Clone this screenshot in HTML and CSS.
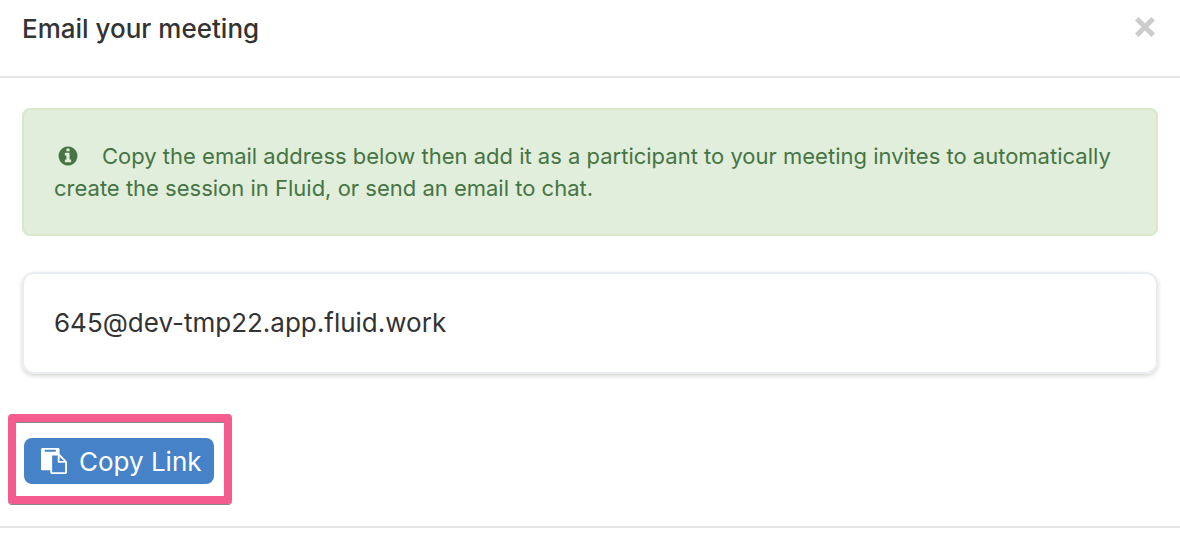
FILE: index.html
```html
<!DOCTYPE html>
<html lang="en">
  <head>
    <meta charset="utf-8">
    <title>Email your meeting</title>
    <link rel="stylesheet" href="styles.css">
  </head>
  <body>
    <div class="modal">
      <header class="modal-header">
        <h1>Email your meeting</h1>
        <button class="close" type="button" aria-label="Close">
          <svg viewBox="0 0 22 22"><path d="M2.8 2.8l16.4 16.4M19.2 2.8L2.8 19.2"/></svg>
        </button>
      </header>
      <main class="modal-body">
        <p class="alert">
          <svg class="info-icon" viewBox="0 0 1792 1792"><path d="M1152 1376v-160q0-14-9-23t-23-9h-96v-512q0-14-9-23t-23-9h-320q-14 0-23 9t-9 23v160q0 14 9 23t23 9h96v320h-96q-14 0-23 9t-9 23v160q0 14 9 23t23 9h448q14 0 23-9t9-23zm-128-896v-160q0-14-9-23t-23-9h-192q-14 0-23 9t-9 23v160q0 14 9 23t23 9h192q14 0 23-9t9-23zm640 416q0 209-103 385.5t-279.5 279.5-385.5 103-385.5-103-279.5-279.5-103-385.5 103-385.5 279.5-279.5 385.5-103 385.5 103 279.5 279.5 103 385.5z"/></svg>Copy the email address below then add it as a participant to your meeting invites to automatically create the session in Fluid, or send an email to chat.
        </p>
        <div class="address">645@dev-tmp22.app.fluid.work</div>
        <div class="actions">
          <button class="copy" type="button">
            <svg viewBox="0 0 1792 1792"><path d="M768 1664h896v-640h-416q-40 0-68-28t-28-68v-416h-384v1152zm256-1440v-64q0-13-9.5-22.5t-22.5-9.5h-704q-13 0-22.5 9.5t-9.5 22.5v64q0 13 9.5 22.5t22.5 9.5h704q13 0 22.5-9.5t9.5-22.5zm256 672h299l-299-299v299zm512 128v672q0 40-28 68t-68 28h-960q-40 0-68-28t-28-68v-160h-544q-40 0-68-28t-28-68v-1344q0-40 28-68t68-28h1088q40 0 68 28t28 68v328q21 13 36 28l408 408q28 28 48 76t20 88z"/></svg>
            Copy Link
          </button>
        </div>
      </main>
    </div>
  </body>
</html>
```
FILE: styles.css
```css
* {
	box-sizing: border-box;
}

body {
	margin: 0;
	background-color: #fff;
	color: #333;
	font-family: Inter, sans-serif;
}

button {
	border: none;
	font-family: inherit;
	cursor: pointer;
}

.modal-header {
	display: flex;
	justify-content: space-between;
	align-items: flex-start;
	padding: 12px 22px 30px;
	border-bottom: 2px solid #e5e5e5;
}

.modal-header h1 {
	margin: 0;
	font-size: 26px;
	font-weight: 500;
	line-height: 34px;
}

.close {
	padding: 4px 2px;
	background: none;
}

.close svg {
	display: block;
	width: 22px;
	height: 22px;
	stroke: #ccc;
	stroke-width: 5;
}

.modal-body {
	padding: 30px 22px 42px;
	border-bottom: 2px solid #e5e5e5;
}

.alert {
	margin: 0 0 36px;
	padding: 30px;
	border: 2px solid #d8e8c8;
	border-radius: 8px;
	background-color: #e1eedb;
	color: #467443;
	font-size: 22px;
	line-height: 32px;
}

.info-icon {
	width: 22px;
	height: 22px;
	margin: 0 23px 0 3px;
	fill: currentColor;
	vertical-align: -3px;
}

.address {
	padding: 32px 30px;
	border: 2px solid #e9edf1;
	border-radius: 12px;
	box-shadow: 0 2px 4px rgba(0, 0, 0, 0.16);
	font-size: 26px;
	line-height: 34px;
}

.actions {
	margin: 64px 2px 0;
}

.copy {
	display: flex;
	align-items: center;
	gap: 12px;
	position: relative;
	height: 46px;
	padding: 0 12px 0 17px;
	border-radius: 8px;
	background-color: #4682c8;
	color: #fff;
	font-size: 26px;
}

.copy svg {
	width: 26px;
	height: 26px;
	fill: currentColor;
}

/* Highlight around the button */
.copy::after {
	content: '';
	position: absolute;
	inset: -24px -18px -20px -16px;
	border: 8px solid #f45b8e;
	border-radius: 4px;
	box-shadow: 0 1px 0 #888, inset 0 1px 0 #888;
}
```
